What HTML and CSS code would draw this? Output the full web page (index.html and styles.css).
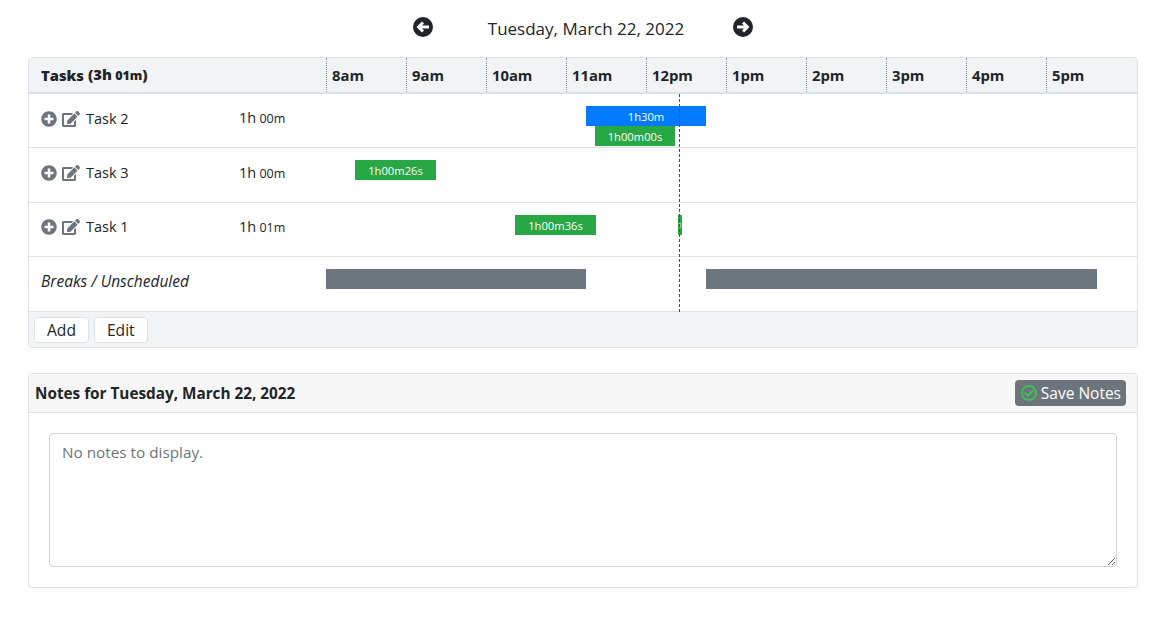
FILE: index.html
```html
<!DOCTYPE html>
<html>
<head>
<meta http-equiv="Content-Type" content="text/html; charset=utf-8"/>
<title>Tasks</title>
<link rel="stylesheet" href="styles.css">
</head>
<body>

<div class="day-nav">
  <svg class="nav-icon" viewBox="0 0 20 20"><path fill-rule="evenodd" d="M10 0a10 10 0 1 0 0 20a10 10 0 1 0 0-20zM3.5 10L9 4.5L11 6.5L9 8.5H16V11.5H9L11 13.5L9 15.5z"/></svg>
  <div class="day-title">Tuesday, March 22, 2022</div>
  <svg class="nav-icon" viewBox="0 0 20 20"><path fill-rule="evenodd" d="M10 0a10 10 0 1 0 0 20a10 10 0 1 0 0-20zM16.5 10L11 4.5L9 6.5L11 8.5H4V11.5H11L9 13.5L11 15.5z"/></svg>
</div>

<div class="card tasks">
  <div class="tasks-head">
    <div class="name-col"><b>Tasks</b> <b class="total">(3h<span class="mins"> 01m</span>)</b></div>
    <div class="hours">
      <div class="hour">8am</div>
      <div class="hour">9am</div>
      <div class="hour">10am</div>
      <div class="hour">11am</div>
      <div class="hour">12pm</div>
      <div class="hour">1pm</div>
      <div class="hour">2pm</div>
      <div class="hour">3pm</div>
      <div class="hour">4pm</div>
      <div class="hour">5pm</div>
    </div>
  </div>

  <div class="rows">
    <div class="row">
      <div class="name-col task-name">
        <svg class="icon" viewBox="0 0 512 512"><use href="#plus"/></svg>
        <svg class="icon icon-edit" viewBox="0 0 576 512"><use href="#edit"/></svg>
        <span class="label">Task 2</span>
        <span class="spent">1h<span class="mins"> 00m</span></span>
      </div>
      <div class="timeline">
        <div class="bar planned" style="left:260px;width:120px;top:12px">1h30m</div>
        <div class="bar actual" style="left:269px;width:80px;top:32px">1h00m00s</div>
      </div>
    </div>
    <div class="row">
      <div class="name-col task-name">
        <svg class="icon" viewBox="0 0 512 512"><use href="#plus"/></svg>
        <svg class="icon icon-edit" viewBox="0 0 576 512"><use href="#edit"/></svg>
        <span class="label">Task 3</span>
        <span class="spent">1h<span class="mins"> 00m</span></span>
      </div>
      <div class="timeline">
        <div class="bar actual" style="left:29px;width:81px;top:12px">1h00m26s</div>
      </div>
    </div>
    <div class="row">
      <div class="name-col task-name">
        <svg class="icon" viewBox="0 0 512 512"><use href="#plus"/></svg>
        <svg class="icon icon-edit" viewBox="0 0 576 512"><use href="#edit"/></svg>
        <span class="label">Task 1</span>
        <span class="spent">1h<span class="mins"> 01m</span></span>
      </div>
      <div class="timeline">
        <div class="bar actual" style="left:189px;width:81px;top:12px">1h00m36s</div>
        <div class="bar actual tiny" style="left:352px;width:4px;top:12px">1</div>
      </div>
    </div>
    <div class="row">
      <div class="name-col breaks">Breaks / Unscheduled</div>
      <div class="timeline">
        <div class="bar break" style="left:0;width:260px;top:12px"></div>
        <div class="bar break" style="left:380px;width:391px;top:12px"></div>
      </div>
    </div>
    <div class="now-line"></div>
  </div>

  <div class="tasks-foot">
    <button class="btn">Add</button>
    <button class="btn">Edit</button>
  </div>
</div>

<div class="card notes">
  <div class="notes-head">
    <b>Notes for Tuesday, March 22, 2022</b>
    <button class="btn-save">
      <svg class="icon-check" viewBox="0 0 512 512"><path d="M256 8C119.033 8 8 119.033 8 256s111.033 248 248 248 248-111.033 248-248S392.967 8 256 8zm0 48c110.532 0 200 89.451 200 200 0 110.532-89.451 200-200 200-110.532 0-200-89.451-200-200 0-110.532 89.451-200 200-200m140.204 130.267l-22.536-22.718c-4.667-4.705-12.265-4.736-16.97-.068L215.346 303.697l-59.792-60.277c-4.667-4.705-12.265-4.736-16.97-.069l-22.719 22.536c-4.705 4.667-4.736 12.265-.068 16.971l90.781 91.516c4.667 4.705 12.265 4.736 16.97.068l172.589-171.204c4.704-4.668 4.734-12.266.067-16.971z"/></svg>
      Save Notes
    </button>
  </div>
  <div class="notes-body">
    <textarea class="notes-text" placeholder="No notes to display."></textarea>
  </div>
</div>

<svg class="defs" width="0" height="0">
  <symbol id="plus" viewBox="0 0 512 512"><path d="M256 8C119 8 8 119 8 256s111 248 248 248 248-111 248-248S393 8 256 8zm144 276c0 6.6-5.4 12-12 12h-92v92c0 6.6-5.4 12-12 12h-56c-6.6 0-12-5.4-12-12v-92h-92c-6.6 0-12-5.4-12-12v-56c0-6.6 5.4-12 12-12h92v-92c0-6.6 5.4-12 12-12h56c6.6 0 12 5.4 12 12v92h92c6.6 0 12 5.4 12 12v56z"/></symbol>
  <symbol id="edit" viewBox="0 0 576 512"><path d="M402.6 83.2l90.2 90.2c3.8 3.8 3.8 10 0 13.8L274.4 405.6l-92.8 10.3c-12.4 1.4-22.9-9.1-21.5-21.5l10.3-92.8L388.8 83.2c3.8-3.8 10-3.8 13.8 0zm162-22.9l-48.8-48.8c-15.2-15.2-39.9-15.2-55.2 0l-35.4 35.4c-3.8 3.8-3.8 10 0 13.8l90.2 90.2c3.8 3.8 10 3.8 13.8 0l35.4-35.4c15.2-15.3 15.2-40 0-55.2zM384 346.2V448H64V128h229.8c3.2 0 6.2-1.3 8.5-3.5l40-40c7.6-7.6 2.2-20.5-8.5-20.5H48C21.5 64 0 85.5 0 112v352c0 26.5 21.5 48 48 48h352c26.5 0 48-21.5 48-48V306.2c0-10.7-12.9-16-20.5-8.5l-40 40c-2.2 2.3-3.5 5.3-3.5 8.5z"/></symbol>
</svg>

</body>
</html>
```

FILE: styles.css
```css
body {
  margin: 0;
  padding: 0 21px 0 28px;
  font-family: "Open Sans", "Noto Sans", sans-serif;
  font-size: 14.5px;
  line-height: 20px;
  color: #212529;
  background-color: white;
}

.day-nav {
  display: flex;
  justify-content: center;
  align-items: center;
  height: 57px;
}

.day-title {
  width: 300px;
  box-sizing: border-box;
  padding-left: 6px;
  text-align: center;
  font-size: 17px;
}

.nav-icon {
  width: 20px;
  height: 20px;
  margin-bottom: 3px;
  fill: #212529;
}

.card {
  border: 1px solid #dee2e6;
  border-radius: 4px;
  overflow: hidden;
}

.tasks-head {
  display: flex;
  height: 36px;
  box-sizing: border-box;
  background-color: #f2f3f5;
  border-bottom: 2px solid #dee2e6;
  font-weight: bold;
  font-size: 14.8px;
}

.name-col {
  width: 297px;
  box-sizing: border-box;
  padding-left: 12px;
  flex-shrink: 0;
  display: flex;
  align-items: center;
}

.total {
  margin-left: 4px;
}

.mins {
  font-size: 12.5px;
}

.hours {
  display: flex;
}

.hour {
  width: 80px;
  box-sizing: border-box;
  padding: 7px 0 0 5px;
  border-left: 1px dotted #868e96;
}

.rows {
  position: relative;
}

.row {
  display: flex;
  height: 54.4px;
  box-sizing: border-box;
  border-bottom: 1px solid #dee2e6;
}

.task-name {
  font-size: 14.5px;
  padding-bottom: 4px;
}

.icon {
  width: 16px;
  height: 16px;
  fill: #6c757d;
  margin-right: 5px;
}

.icon-edit {
  width: 18px;
  margin-right: 6px;
}

.label {
  width: 153px;
}

.spent {
  white-space: pre;
}

.breaks {
  font-style: italic;
  font-size: 15.5px;
  padding-bottom: 6px;
}

.timeline {
  position: relative;
  flex: 1;
}

.bar {
  position: absolute;
  height: 20px;
  box-sizing: border-box;
  padding-top: 1px;
  color: white;
  font-size: 11.2px;
  line-height: 20px;
  text-align: center;
  overflow: hidden;
}

.tiny {
  font-size: 7px;
}

.planned {
  background-color: #007bff;
}

.actual {
  background-color: #28a745;
}

.break {
  background-color: #6c757d;
}

.now-line {
  position: absolute;
  left: 650px;
  top: 0;
  bottom: 0;
  border-left: 1px dashed #d0101c;
}

.tasks-foot {
  display: flex;
  gap: 5px;
  height: 35.4px;
  box-sizing: border-box;
  padding: 5px;
  background-color: #f2f3f5;
}

.btn {
  height: 26px;
  padding: 0 12px;
  font-family: inherit;
  font-size: 15.6px;
  color: #212529;
  background-color: white;
  border: 1px solid #dee2e6;
  border-radius: 4px;
}

.notes {
  margin-top: 25px;
}

.notes-head {
  display: flex;
  justify-content: space-between;
  align-items: center;
  height: 39px;
  box-sizing: border-box;
  padding: 0 11px 0 6px;
  background-color: #f7f7f7;
  border-bottom: 1px solid #dee2e6;
  font-size: 15.3px;
}

.btn-save {
  display: flex;
  align-items: center;
  gap: 4px;
  height: 26px;
  padding: 0 5px 0 6px;
  font-family: inherit;
  font-size: 15.5px;
  color: white;
  background-color: #6c757d;
  border: none;
  border-radius: 4px;
}

.icon-check {
  width: 16px;
  height: 16px;
  fill: #3dc94f;
  stroke: #3dc94f;
  stroke-width: 10;
}

.notes-body {
  padding: 20px;
  display: flex;
}

.notes-text {
  flex: 1;
  height: 134px;
  box-sizing: border-box;
  padding: 7px 12px;
  font-family: inherit;
  font-size: 15.3px;
  line-height: 22px;
  color: #495057;
  border: 1px solid #ced4da;
  border-radius: 4px;
}

.notes-text::placeholder {
  color: #6c757d;
  opacity: 1;
}

.defs {
  position: absolute;
}
```
